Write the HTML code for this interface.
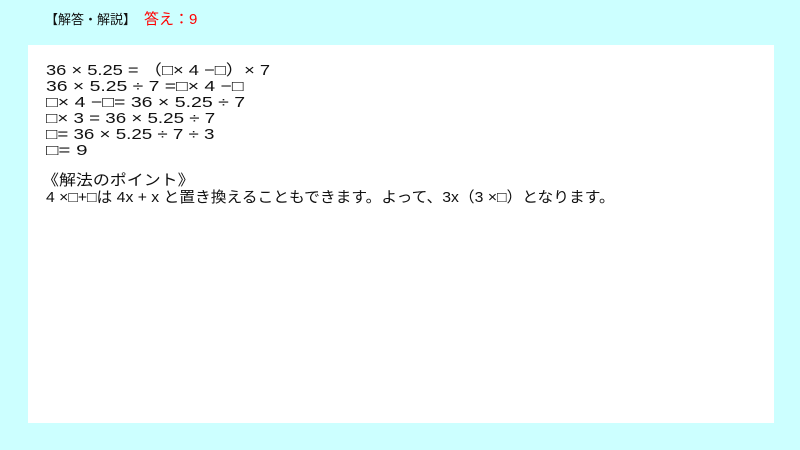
<!DOCTYPE html>
<html><head><meta charset="utf-8"><style>
html,body{margin:0;padding:0}
body{width:800px;height:450px;background:#ccffff;position:relative;overflow:hidden;font-family:"Liberation Sans","Noto Sans CJK JP",sans-serif;color:#111}
.h{position:absolute;left:45px;top:10px;font-size:13px;line-height:20px;white-space:pre}
.h span{color:#ff0000;margin-left:8px;font-size:15px}
.p{position:absolute;left:28px;top:45px;width:746px;height:378px;background:#fff}
.l{position:absolute;left:46px;font-size:15px;line-height:16px;white-space:pre;transform-origin:0 0}
</style></head><body>
<div class="h">【解答・解説】<span>答え：9</span></div>
<div class="p"></div>
<div class="l" style="top:63px;transform:scaleX(1.22)">36 × 5.25 = （□× 4 −□）× 7</div>
<div class="l" style="top:79px;transform:scaleX(1.29)">36 × 5.25 ÷ 7 =□× 4 −□</div>
<div class="l" style="top:95px;transform:scaleX(1.30)">□× 4 −□= 36 × 5.25 ÷ 7</div>
<div class="l" style="top:111px;transform:scaleX(1.25)">□× 3 = 36 × 5.25 ÷ 7</div>
<div class="l" style="top:127px;transform:scaleX(1.25)">□= 36 × 5.25 ÷ 7 ÷ 3</div>
<div class="l" style="top:143px;transform:scaleX(1.37)">□= 9</div>
<div class="l" style="top:173px;left:42px;transform:scaleX(1.13)">《解法のポイント》</div>
<div class="l" style="top:190px;transform:scaleX(1.05)">4 ×□+□は 4x + x と置き換えることもできます。よって、3x（3 ×□）となります。</div>
</body></html>
